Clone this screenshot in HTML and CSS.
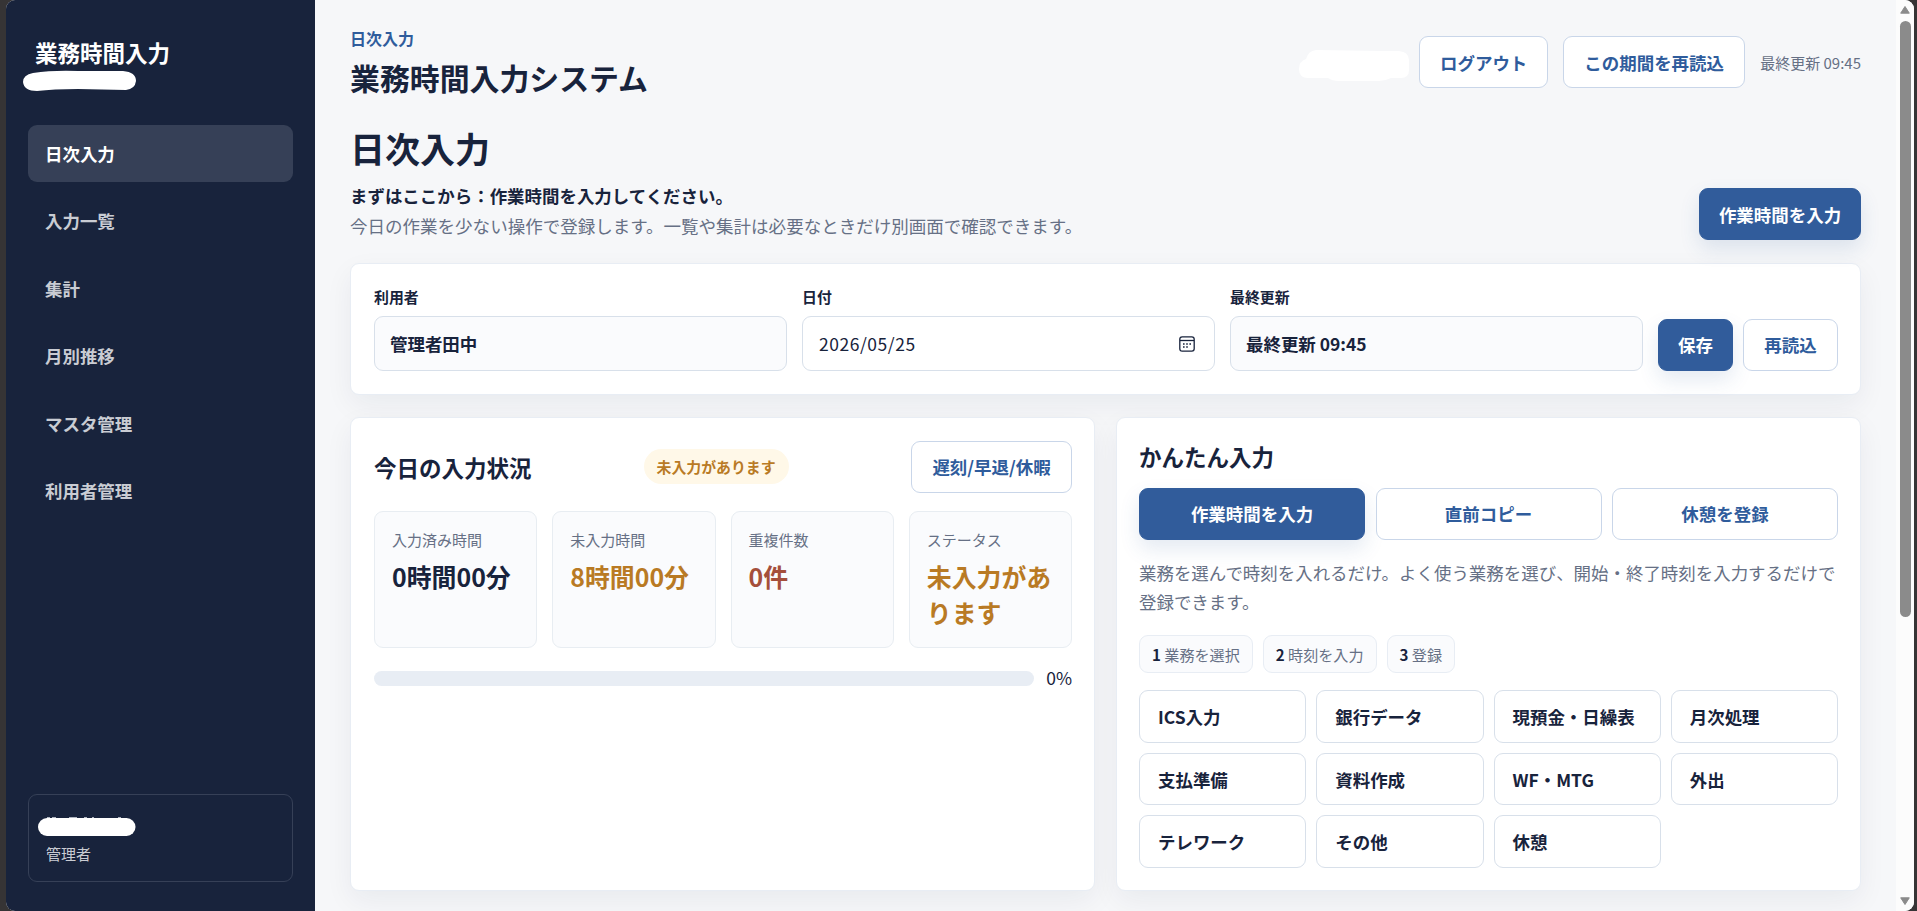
FILE: index.html
```html
<!DOCTYPE html>
<html lang="ja">
<head>
<meta charset="utf-8">
<title>業務時間入力システム</title>
<link rel="stylesheet" href="styles.css">
</head>
<body>
<div class="window">
  <aside class="sidebar">
    <div class="brand">業務時間入力</div>
    <svg class="brand-mask" width="114" height="22" viewBox="0 0 114 22"><path d="M10 3Q30 0 55 1L100 1Q113 2 113 11Q112 19 103 20L55 19Q30 19 14 21Q1 21 0 12Q0 5 10 3Z" fill="#fff"/></svg>
    <nav class="nav">
      <a class="nav-item active">日次入力</a>
      <a class="nav-item">入力一覧</a>
      <a class="nav-item">集計</a>
      <a class="nav-item">月別推移</a>
      <a class="nav-item">マスタ管理</a>
      <a class="nav-item">利用者管理</a>
    </nav>
    <div class="user-box">
      <svg class="user-mask" width="98" height="19" viewBox="0 0 98 19"><rect y="1" width="97.500" height="18" rx="9" fill="#fff"/><path d="M9 .5h3M14 .5h4M31 .5h8M46 .5h3M54 .5h2M80 .5h3" stroke="#aeb4c0"/></svg>
      <div class="role">管理者</div>
    </div>
  </aside>

  <main class="main">
    <header class="topbar">
      <div class="titles">
        <div class="eyebrow">日次入力</div>
        <h1>業務時間入力システム</h1>
      </div>
      <div class="top-actions">
        <svg class="name-mask" width="110" height="31" viewBox="0 0 110 31"><path d="M17 0L84 1H100Q110 2 110 10V20Q110 28 102 28H92Q86 31 80 31H40Q33 31 29 28H9Q0 28 0 19Q0 11 7 9Q9 1 17 0Z" fill="#fff"/></svg>
        <button class="btn logout">ログアウト</button>
        <button class="btn reload">この期間を再読込</button>
        <span class="updated">最終更新 09:45</span>
      </div>
    </header>

    <section class="page-head">
      <div>
        <h2>日次入力</h2>
        <p class="lead">まずはここから：作業時間を入力してください。</p>
        <p class="sub">今日の作業を少ない操作で登録します。一覧や集計は必要なときだけ別画面で確認できます。</p>
      </div>
      <button class="btn primary head-btn">作業時間を入力</button>
    </section>

    <section class="panel filters">
      <div class="field"><label>利用者</label><div class="control filled">管理者田中</div></div>
      <div class="field"><label>日付</label><div class="control date"><span>2026/05/25</span>
        <svg width="16" height="16" viewBox="0 0 16 16" fill="none" stroke="#18233c" stroke-width="1.3"><rect x=".8" y=".8" width="14.4" height="14.4" rx="2.4"/><path d="M1 4.5h14"/><path d="M4 8h1.6M7.2 8h1.6M10.4 8H12M4 11h1.6M7.2 11h1.6" stroke-width="1.7"/></svg>
      </div></div>
      <div class="field"><label>最終更新</label><div class="control filled">最終更新 09:45</div></div>
      <div class="filter-actions">
        <button class="btn primary save">保存</button>
        <button class="btn again">再読込</button>
      </div>
    </section>

    <div class="cards">
      <section class="panel card status-card">
        <div class="status-head">
          <h3>今日の入力状況</h3>
          <span class="badge">未入力があります</span>
          <button class="btn leave">遅刻/早退/休暇</button>
        </div>
        <div class="metrics">
          <div class="metric"><span>入力済み時間</span><strong>0時間00分</strong></div>
          <div class="metric"><span>未入力時間</span><strong class="warn">8時間00分</strong></div>
          <div class="metric"><span>重複件数</span><strong class="danger">0件</strong></div>
          <div class="metric"><span>ステータス</span><strong class="warn">未入力があります</strong></div>
        </div>
        <div class="progress"><div class="bar"></div><span>0%</span></div>
      </section>

      <section class="panel card">
        <h3 class="quick-title">かんたん入力</h3>
        <div class="quick">
          <button class="btn primary">作業時間を入力</button>
          <button class="btn">直前コピー</button>
          <button class="btn">休憩を登録</button>
        </div>
        <p class="desc">業務を選んで時刻を入れるだけ。よく使う業務を選び、開始・終了時刻を入力するだけで登録できます。</p>
        <div class="steps">
          <span><b>1</b> 業務を選択</span>
          <span><b>2</b> 時刻を入力</span>
          <span><b>3</b> 登録</span>
        </div>
        <div class="tasks">
          <button>ICS入力</button><button>銀行データ</button><button>現預金・日繰表</button><button>月次処理</button>
          <button>支払準備</button><button>資料作成</button><button>WF・MTG</button><button>外出</button>
          <button>テレワーク</button><button>その他</button><button>休憩</button>
        </div>
      </section>
    </div>
  </main>

  <div class="scrollbar">
    <svg width="10" height="8" viewBox="0 0 10 8"><path d="M5 .5L9.3 7.2H.7Z" fill="#8b8b8b" stroke="#8b8b8b" stroke-linejoin="round"/></svg>
    <div class="thumb"></div>
    <svg class="down" width="10" height="8" viewBox="0 0 10 8"><path d="M5 7.5L9.3 .8H.7Z" fill="#8b8b8b" stroke="#8b8b8b" stroke-linejoin="round"/></svg>
  </div>
</div>
</body>
</html>
```
FILE: styles.css
```css
* { box-sizing: border-box; }
body {
  margin: 0;
  height: 911px;
  overflow: hidden;
  background: #363435;
  color: #18233c;
  font-family: "Noto Sans CJK JP", sans-serif;
  font-size: 17.47px;
  line-height: 26px;
}
h1, h2, h3, p { margin: 0; }
button { font: inherit; color: inherit; cursor: pointer; }

.window {
  display: flex;
  height: 911px;
  margin: 0 3px 0 6px;
  border-radius: 9px;
  overflow: hidden;
  background: #f6f7f9;
}

.sidebar {
  display: flex;
  flex-direction: column;
  flex: none;
  width: 309px;
  padding: 35px 22px 29px;
  background: #18233c;
  color: #fff;
}
.brand { padding-left: 7px; height: 35px; font-size: 22.5px; font-weight: 700; line-height: 34px; }
.brand-mask { display: block; flex: none; margin-left: -5px; }
.nav { display: flex; flex-direction: column; gap: 10.4px; margin-top: 33px; }
.nav-item {
  height: 57px;
  padding: 0 17px;
  border-radius: 9px;
  line-height: 57px;
  font-weight: 700;
  color: #c9ccd3;
}
.nav-item.active { background: #364057; color: #fff; }
.user-box {
  height: 88px;
  margin-top: auto;
  padding: 22px 17px 0 9px;
  border: 1px solid #364057;
  border-radius: 9px;
}
.user-mask { display: block; }
.role { padding-left: 8px; margin-top: 7px; font-size: 15px; line-height: 22px; color: #c9ccd3; }

.main { flex: 1; min-width: 0; padding: 26px 35px 0; }
.topbar { display: flex; justify-content: space-between; height: 75px; }
.eyebrow { height: 26px; font-size: 16px; line-height: 25px; font-weight: 700; color: #2f5c9c; }
h1 { font-size: 29.9px; line-height: 44px; margin-top: 3px; }
.top-actions { display: flex; align-items: center; height: 52px; margin-top: 10px; }
.name-mask { margin: 6px 10px 0 0; }
.btn {
  height: 52px;
  padding: 0;
  border: 1px solid #c9d6e9;
  border-radius: 9px;
  background: #fff;
  color: #2f5c9c;
  font-weight: 700;
  white-space: nowrap;
}
.btn.primary {
  border-color: #315c9b;
  background: #315c9b;
  color: #fff;
  box-shadow: 0 9px 20px rgba(49, 92, 155, .13);
}
.logout { width: 129px; margin-right: 15px; }
.reload { width: 182px; margin-right: 15px; }
.top-actions .btn { padding-top: 2px; }
.updated { padding-top: 1px; font-size: 15px; color: #667085; }

.page-head { display: flex; justify-content: space-between; align-items: flex-end; margin-top: 22px; height: 117px; }
h2 { font-size: 35px; line-height: 50px; }
.lead { margin-top: 10px; font-weight: 700; }
.sub { margin: 4px 0 1px; color: #667085; font-size: 17.53px; }
.page-head h2 { margin-top: -1px; }
.head-btn { width: 162px; padding-top: 2px; }

.panel {
  border: 1px solid #e8edf4;
  border-radius: 9px;
  background: #fff;
  box-shadow: 0 10px 28px rgba(24, 35, 60, .06);
}
.filters {
  display: flex;
  align-items: flex-end;
  gap: 15px;
  height: 132px;
  margin-top: 23px;
  padding: 0 22px 23px 23px;
}
.field { flex: 1; }
.field label { display: block; height: 24px; margin-bottom: 7px; font-size: 14.9px; line-height: 24px; font-weight: 700; }
.control {
  display: flex;
  align-items: center;
  justify-content: space-between;
  height: 55px;
  padding: 0 19px 0 15px;
  border: 1px solid #d8e0ea;
  border-radius: 9px;
}
.control.filled { background: #fafbfd; font-weight: 700; }
.control.date { padding-left: 16px; letter-spacing: .55px; }
.filter-actions { display: flex; gap: 10px; }
.save { width: 75px; }
.again { width: 95px; }

.cards { display: grid; grid-template-columns: 1fr 1fr; gap: 21px; margin-top: 22px; }
.card { height: 474px; padding: 22px; }
.status-card { padding: 23px 22px 22px 23px; }
h3 { font-size: 22.5px; line-height: 34px; }
.status-head { display: flex; align-items: center; }
.badge {
  height: 35px;
  margin: -2px auto 0 112px;
  padding: 0 13px;
  border-radius: 18px;
  background: #fff8e8;
  color: #b97a24;
  font-size: 14.9px;
  font-weight: 700;
  line-height: 35px;
}
.leave { width: 161px; }
.metrics { display: grid; grid-template-columns: repeat(4, 1fr); gap: 15px; margin-top: 18px; }
.metric {
  height: 137px;
  padding: 17px 15px 0 17px;
  border: 1px solid #e8edf2;
  border-radius: 9px;
  background: #fafbfd;
}
.metric span { display: block; font-size: 15px; line-height: 22px; color: #667085; }
.metric strong { display: block; margin-top: 7px; font-size: 24.9px; line-height: 36px; }
.metric strong.warn { color: #b97a24; }
.metric strong.danger { color: #a54f3b; }
.progress { display: flex; align-items: center; gap: 12px; margin-top: 17px; }
.bar { flex: 1; height: 15px; border-radius: 8px; background: #e8edf4; }

.quick-title { line-height: 33px; }
.quick { display: grid; grid-template-columns: repeat(3, 1fr); gap: 10.5px; margin-top: 15px; }
.desc { margin-top: 18px; line-height: 29px; color: #667085; }
.steps { display: flex; gap: 10px; margin-top: 19px; }
.steps span {
  height: 38px;
  padding: 0 12px;
  border: 1px solid #e8edf4;
  border-radius: 9px;
  background: #fafbfd;
  color: #667085;
  font-size: 15.1px;
  line-height: 36px;
  white-space: nowrap;
}
.steps b { color: #18233c; }
.tasks { display: grid; grid-template-columns: repeat(4, 1fr); gap: 10px; margin-top: 17px; }
.tasks button {
  height: 52.7px;
  padding: 1px 0 0 18px;
  border: 1px solid #d8e0ea;
  border-radius: 9px;
  background: #fff;
  font-weight: 700;
  text-align: left;
  white-space: nowrap;
}

.scrollbar {
  display: flex;
  flex-direction: column;
  align-items: center;
  flex: none;
  width: 18px;
  padding: 6px 0 6px;
  background: #fcfcfc;
}
.thumb { width: 11px; height: 596px; margin-top: 7px; border-radius: 6px; background: #8b8b8b; }
.down { margin-top: auto; }
```
